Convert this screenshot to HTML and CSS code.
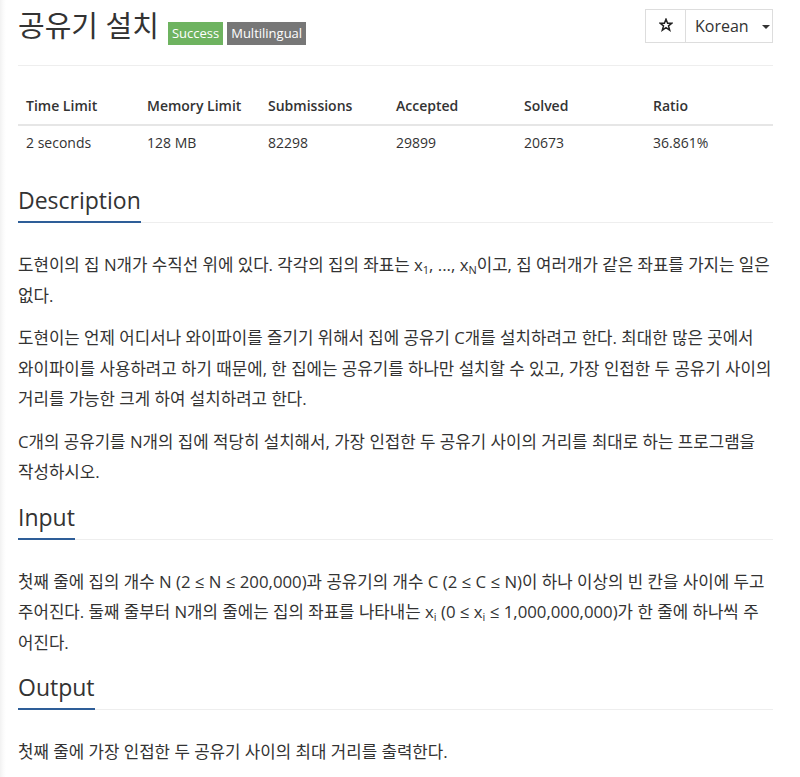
FILE: index.html
```html
<!DOCTYPE html>
<html lang="ko">
<head>
<meta charset="utf-8">
<title>공유기 설치</title>
<link rel="stylesheet" href="styles.css">
</head>
<body>
<div class="page">
  <div class="header">
    <h1 class="title"><span class="title-text">공유기 설치</span><span class="label label-success">Success</span><span class="label label-default">Multilingual</span></h1>
    <div class="btn-group">
      <span class="btn btn-star"><svg width="14" height="14" viewBox="0 0 14 14"><path d="M7 1.2 L8.6 5.2 L12.8 5.3 L9.5 7.9 L10.7 12.2 L7 9.7 L3.3 12.2 L4.5 7.9 L1.2 5.3 L5.4 5.2 Z" fill="none" stroke="#222" stroke-width="1.5" stroke-linejoin="miter"/></svg></span>
      <span class="btn btn-lang">Korean <span class="caret"></span></span>
    </div>
  </div>
  <table class="info">
    <thead>
      <tr><th class="c1">Time Limit</th><th class="c2">Memory Limit</th><th class="c3">Submissions</th><th class="c4">Accepted</th><th class="c5">Solved</th><th class="c6">Ratio</th></tr>
    </thead>
    <tbody>
      <tr><td>2 seconds</td><td>128 MB</td><td>82298</td><td>29899</td><td>20673</td><td>36.861%</td></tr>
    </tbody>
  </table>

  <section class="problem-section first">
    <div class="headline"><h2>Description</h2></div>
    <div class="problem-text">
      <p>도현이의 집 N개가 수직선 위에 있다. 각각의 집의 좌표는 x<sub>1</sub>, ..., x<sub>N</sub>이고, 집 여러개가 같은 좌표를 가지는 일은 없다.</p>
      <p>도현이는 언제 어디서나 와이파이를 즐기기 위해서 집에 공유기 C개를 설치하려고 한다. 최대한 많은 곳에서 와이파이를 사용하려고 하기 때문에, 한 집에는 공유기를 하나만 설치할 수 있고, 가장 인접한 두 공유기 사이의 거리를 가능한 크게 하여 설치하려고 한다.</p>
      <p>C개의 공유기를 N개의 집에 적당히 설치해서, 가장 인접한 두 공유기 사이의 거리를 최대로 하는 프로그램을 작성하시오.</p>
    </div>
  </section>

  <section class="problem-section">
    <div class="headline"><h2>Input</h2></div>
    <div class="problem-text">
      <p>첫째 줄에 집의 개수 N (2 ≤ N ≤ 200,000)과 공유기의 개수 C (2 ≤ C ≤ N)이 하나 이상의 빈 칸을 사이에 두고 주어진다. 둘째 줄부터 N개의 줄에는 집의 좌표를 나타내는 x<sub>i</sub> (0 ≤ x<sub>i</sub> ≤ 1,000,000,000)가 한 줄에 하나씩 주어진다.</p>
    </div>
  </section>

  <section class="problem-section">
    <div class="headline"><h2>Output</h2></div>
    <div class="problem-text">
      <p>첫째 줄에 가장 인접한 두 공유기 사이의 최대 거리를 출력한다.</p>
    </div>
  </section>
</div>
</body>
</html>
```

FILE: styles.css
```css
html, body {
  margin: 0;
  padding: 0;
}
body {
  background: #fff;
  font-family: "Open Sans", "Noto Sans CJK KR", sans-serif;
  color: #333;
  font-size: 14px;
}
.page {
  padding: 0 27px 0 18px;
  background: linear-gradient(to right, #f2f2f2 0, #fafafa 3px, #fff 6px);
  min-height: 777px;
}
.header {
  display: flex;
  justify-content: space-between;
  align-items: flex-start;
  border-bottom: 1px solid #eee;
  height: 65px;
}
.title {
  margin: 0;
  padding-top: 6px;
  display: flex;
  align-items: flex-start;
  font-weight: 400;
  font-size: 29px;
  line-height: 40px;
  color: #333;
}
.title-text {
  margin-right: 9px;
}
.label {
  display: inline-block;
  font-size: 13px;
  line-height: 15px;
  color: #fff;
  padding: 4px 4px 4px;
  margin-right: 4px;
  margin-top: 16px;
  font-weight: 400;
}
.label-success { background: #6eb360; }
.label-default { background: #777; }
.btn-group {
  display: flex;
  margin-top: 9px;
  border: 1px solid #ddd;
  height: 32px;
}
.btn {
  display: flex;
  align-items: center;
  justify-content: center;
  font-size: 16px;
  color: #333;
}
.btn-star {
  width: 39px;
  border-right: 1px solid #ddd;
}
.btn-star svg {
  display: block;
  margin-top: -2px;
}
.btn-lang {
  width: 86px;
  justify-content: flex-start;
  padding-left: 9px;
  box-sizing: border-box;
}
.caret {
  display: inline-block;
  width: 0;
  height: 0;
  border-top: 4px solid #333;
  border-left: 4px solid transparent;
  border-right: 4px solid transparent;
  margin-left: 13px;
  margin-top: 2px;
}
.info {
  width: 755px;
  border-collapse: collapse;
  margin-top: 22px;
  table-layout: fixed;
}
.info th, .info td {
  text-align: left;
  padding: 8px;
  font-size: 14px;
  line-height: 20px;
}
.info th {
  font-weight: 600;
  border-bottom: 2px solid #e6e6e6;
}
.info td {
  padding-top: 7px;
}
.c1 { width: 105px; }
.c2 { width: 105px; }
.c3 { width: 112px; }
.c4 { width: 112px; }
.c5 { width: 113px; }
.c6 { width: auto; }
.problem-section {
  margin-top: 14px;
}
.problem-section.first {
  margin-top: 24px;
}
.headline {
  border-bottom: 1px solid #eee;
  display: flex;
}
.headline h2 {
  margin: 0 0 -1px;
  font-size: 23px;
  line-height: 31px;
  font-weight: 400;
  color: #333;
  padding-bottom: 5px;
  border-bottom: 2px solid #2e5e98;
}
.problem-text {
  padding-top: 27px;
}
.problem-text p {
  margin: 0 0 12px;
  font-size: 16.8px;
  line-height: 30.5px;
  color: #333;
}
sub {
  font-size: 11px;
  line-height: 0;
  vertical-align: -3px;
}
```
